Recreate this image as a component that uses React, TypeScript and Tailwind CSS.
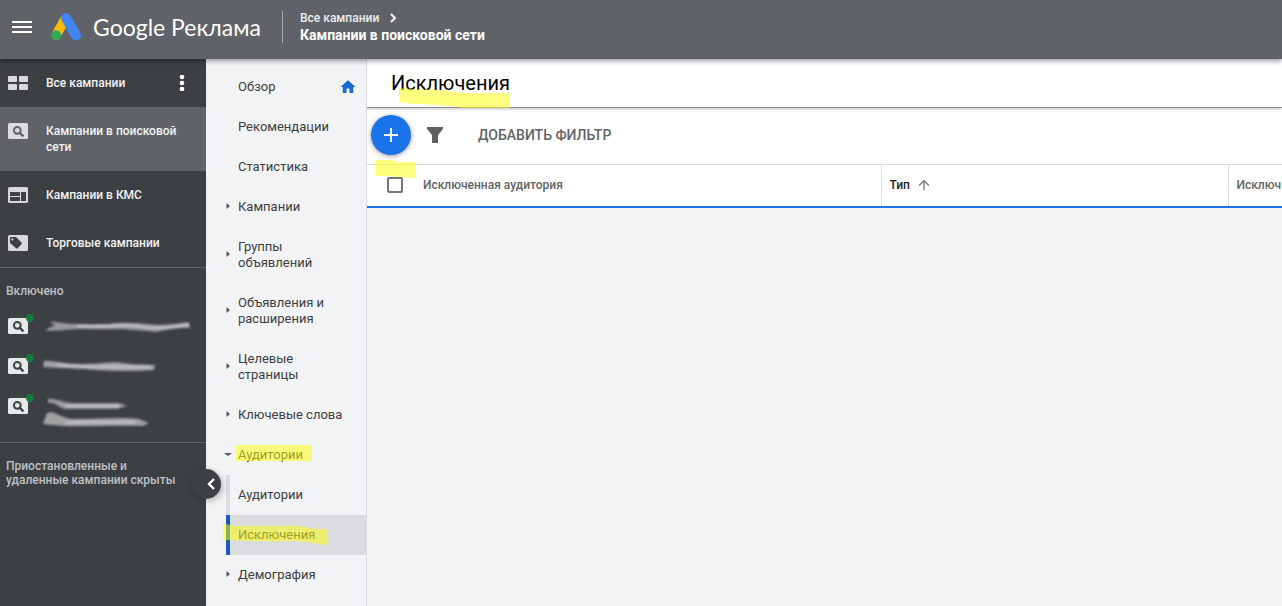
import { useState } from "react";
import { MdArrowUpward, MdHome } from "react-icons/md";

type Campaign = { id: string; label: string; icon: React.ReactNode };
type NavItem = { label: string; arrow?: boolean; open?: boolean; home?: boolean };

function GridIcon() {
  return (
    <svg width="20" height="14" viewBox="0 0 20 14" fill="#d6d8da">
      <rect width="9" height="6" rx="1" />
      <rect x="11" width="9" height="6" rx="1" />
      <rect y="8" width="9" height="6" rx="1" />
      <rect x="11" y="8" width="9" height="6" rx="1" />
    </svg>
  );
}

function SearchBoxIcon({ box, glass }: { box: string; glass: string }) {
  return (
    <svg width="20" height="16" viewBox="0 0 20 16">
      <rect width="20" height="16" rx="1.5" fill={box} />
      <circle cx="9.3" cy="7.3" r="3.4" fill="none" stroke={glass} strokeWidth="2" />
      <path d="M11.6 9.6 15.4 13.4" stroke={glass} strokeWidth="2.2" />
    </svg>
  );
}

function DisplayIcon() {
  return (
    <svg width="20" height="16" viewBox="0 0 20 16">
      <rect width="20" height="16" rx="1.5" fill="#d6d8da" />
      <path d="M2 5h10v4H2zM2 10h10v4H2zM13 5h5v9h-5z" fill="#3c4043" />
    </svg>
  );
}

function TagIcon() {
  return (
    <svg width="20" height="16" viewBox="0 0 20 16">
      <rect width="20" height="16" rx="1.5" fill="#d6d8da" />
      <path
        fillRule="evenodd"
        d="M2 3.2C2 2.4 2.5 2 3.2 2h4.3c.4 0 .7.1 1 .4l5 5.2c.5.5.5 1.1 0 1.6l-3.8 4c-.5.5-1.1.5-1.600 0L2.400 8.300c-.3-.3-.4-.6-.4-1zM4.300 3.300a1.100 1.100 0 1 0 0 2.200 1.100 1.100 0 0 0 0-2.200z"
        fill="#3c4043"
      />
    </svg>
  );
}

function AdsLogo() {
  return (
    <svg width="30" height="28" viewBox="0 0 30 28" className="shrink-0">
      <path d="M14.5 5.5 5.2 21.8" stroke="#fbbc04" strokeWidth="9.6" />
      <path d="M15 5 25 22.3" stroke="#4285f4" strokeWidth="10" strokeLinecap="round" />
      <circle cx="5.2" cy="22.3" r="5" fill="#34a853" />
    </svg>
  );
}

const campaigns: Campaign[] = [
  { id: "all", label: "Все кампании", icon: <GridIcon /> },
  {
    id: "search",
    label: "Кампании в поисковой сети",
    icon: <SearchBoxIcon box="#dadce0" glass="#5f6368" />,
  },
  { id: "display", label: "Кампании в КМС", icon: <DisplayIcon /> },
  { id: "shopping", label: "Торговые кампании", icon: <TagIcon /> },
];

const navItems: NavItem[] = [
  { label: "Обзор", home: true },
  { label: "Рекомендации" },
  { label: "Статистика" },
  { label: "Кампании", arrow: true },
  { label: "Группы объявлений", arrow: true },
  { label: "Объявления и расширения", arrow: true },
  { label: "Целевые страницы", arrow: true },
  { label: "Ключевые слова", arrow: true },
  { label: "Аудитории", arrow: true, open: true },
];

function Header() {
  return (
    <header className="relative z-20 flex h-[59px] shrink-0 items-center bg-[#5f6368] pb-1.5 pl-3 text-white shadow-[0_2px_5px_rgba(0,0,0,0.4)]">
      <button type="button" aria-label="Меню" className="flex h-6 w-5 items-center">
        <svg width="20" height="12" viewBox="0 0 20 12" fill="#fff">
          <path d="M0 0h20v2H0zM0 5h20v2H0zM0 10h20v2H0z" />
        </svg>
      </button>
      <a href="#" className="ml-[19px] flex items-center gap-3">
        <AdsLogo />
        <span className="w-[177px] whitespace-nowrap font-['Lato',sans-serif] text-[23px] leading-8">
          Google Реклама
        </span>
      </a>
      <nav className="ml-3 flex h-8 flex-col justify-center whitespace-nowrap border-l border-[#a3a6a9] pl-[17px]">
        <a href="#" className="flex items-center gap-2.5 text-xs leading-4 font-medium text-[#eceded]">
          Все кампании
          <svg width="8" height="10" viewBox="0 0 8 10" fill="none">
            <path d="M2 1 6 5 2 9" stroke="#fff" strokeWidth="2" />
          </svg>
        </a>
        <a href="#" className="text-sm leading-[18px] font-bold">
          Кампании в поисковой сети
        </a>
      </nav>
    </header>
  );
}

// Smudged campaign names
function Smudge({ index }: { index: number }) {
  const paths = [
    <>
      <path d="M7 4C12 3 20 6 30 6H66C75 4 90 5 105 6 125 8 135 5 146 4L147 10C132 10 125 12 112 14 80 10 60 12 40 11 25 11 10 14 2 12L12 7Z" fill="#97999a" />
      <path d="M34 8C60 10 80 5 100 9 115 12 130 8 146 7" stroke="#c6c8c8" strokeWidth="2" fill="none" />
    </>,
    <>
      <path d="M1 3C8 2 20 6 40 6S70 3 80 5 100 6 112 7L111 12C90 14 60 13 40 11 20 10 10 10 0 9Z" fill="#9fa1a2" />
      <path d="M14 7C40 10 70 8 108 9" stroke="#c4c6c6" strokeWidth="2" fill="none" />
    </>,
    <>
      <path d="M5 1C14 0 18 5 30 5H76L84 8 74 11H22C15 9 12 4 5 5Z" fill="#999b9c" />
      <path d="M22 8H76" stroke="#c6c8c8" strokeWidth="2" />
      <path d="M4 15C12 12 16 20 30 21 60 21 80 19 96 21L106 25 100 28C70 27 40 29 20 28L0 26Z" fill="#9fa1a2" />
      <path d="M22 25C50 23 70 25 92 24" stroke="#c6c8c8" strokeWidth="2" fill="none" />
    </>,
  ];
  return (
    <svg width="150" height="30" viewBox="0 0 150 30" className="overflow-visible blur-[1px]">
      {paths[index]}
    </svg>
  );
}

function CampaignSidebar() {
  const [active, setActive] = useState("search");

  return (
    <aside className="relative z-10 w-[206px] shrink-0 bg-[#3c4043] text-xs font-medium">
      <ul>
        {campaigns.map((item) => (
          <li
            key={item.id}
            className={item.id === active ? "flex items-start bg-[#5f6368]" : "flex items-start"}
          >
            <button
              type="button"
              onClick={() => setActive(item.id)}
              className="flex grow items-start gap-[18px] py-4 pl-2 text-left leading-4 text-[#f1f3f4]"
            >
              <span className="flex h-4 w-5 shrink-0 items-center">{item.icon}</span>
              <span className="max-w-[140px]">{item.label}</span>
            </button>
            {item.id === "all" && (
              <button type="button" aria-label="Ещё" className="mr-[21px] py-4">
                <svg width="6" height="16" viewBox="0 0 6 16" fill="#fff">
                  <circle cx="3" cy="2" r="2.3" />
                  <circle cx="3" cy="8" r="2.3" />
                  <circle cx="3" cy="14" r="2.3" />
                </svg>
              </button>
            )}
          </li>
        ))}
      </ul>
      <section className="border-y border-[#5f6368] pt-[15px]">
        <h2 className="pl-1.5 leading-4 text-[#bdc1c6]">Включено</h2>
        <ul className="mt-[19px] pb-1">
          {[0, 1, 2].map((i) => (
            <li key={i} className="flex h-10 items-start gap-[15px] pl-2">
              <span className="relative h-4 w-5 shrink-0">
                <SearchBoxIcon box="#e6e9e9" glass="#3c4043" />
                <span className="absolute -top-1 -right-1.5 size-2 rounded-full bg-[#137a42]" />
              </span>
              <Smudge index={i} />
            </li>
          ))}
        </ul>
      </section>
      <p className="pt-4 pr-7 pl-1.5 leading-[14px] text-[#bdc1c6]">
        Приостановленные и удаленные кампании скрыты
      </p>
      <button
        type="button"
        aria-label="Свернуть панель"
        className="absolute top-[410px] -right-[15px] flex size-[30px] items-center justify-end rounded-full bg-[#3c4043] pr-1.5 shadow-[2px_2px_6px_rgba(0,0,0,0.25)]"
      >
        <svg width="8" height="12" viewBox="0 0 8 12" fill="none">
          <path d="M7 1 2 6 7 11" stroke="#fff" strokeWidth="2.4" />
        </svg>
      </button>
    </aside>
  );
}

function PageNav() {
  return (
    <nav className="w-[161px] shrink-0 border-r border-[#dadce0] bg-[#f1f3f4] pt-2 text-[13px] leading-4 text-[#3c4043]">
      <ul>
        {navItems.map((item) => (
          <li key={item.label}>
            <a href="#" className="relative flex items-center py-3 pr-[9px] pl-[18px]">
              <span className="flex w-3.5 shrink-0">
                {item.arrow && (
                  <svg width="8" height="8" viewBox="0 0 8 8" fill="#55595d">
                    <path d={item.open ? "M0 2h8L4 5z" : "M2.500 0v6L6 3z"} />
                  </svg>
                )}
              </span>
              <span className="max-w-[106px] grow">{item.label}</span>
              {item.home && <MdHome size={18} className="-my-px ml-auto text-[#1967d2]" />}
              {item.open && (
                <span className="absolute top-2.5 left-[30px] h-4 w-[76px] bg-[#ffff00]/50" />
              )}
            </a>
          </li>
        ))}
      </ul>
      <ul className="ml-5">
        <li>
          <a href="#" className="block border-l-4 border-[#dadce0] py-3 pl-2">
            Аудитории
          </a>
        </li>
        <li>
          <a
            href="#"
            className="relative block border-l-4 border-[#185abc] bg-[#dadce0] py-3 pl-2"
          >
            Исключения
            <svg
              width="106"
              height="24"
              viewBox="0 0 106 24"
              className="absolute top-2 -left-2"
              fill="#ff0"
              fillOpacity=".5"
            >
              <path d="M1 0C10 4 20 3 40 3 60 3 78 2 84 4S98 6 105 6V22C92 21 85 18 70 18 50 19 30 18 1 17Z" />
            </svg>
          </a>
        </li>
      </ul>
      <a href="#" className="flex items-center py-3 pl-[18px]">
        <span className="flex w-3.5 shrink-0">
          <svg width="8" height="8" viewBox="0 0 8 8" fill="#55595d">
            <path d="M2.500 0v6L6 3z" />
          </svg>
        </span>
        Демография
      </a>
    </nav>
  );
}

function Toolbar() {
  return (
    <div className="flex h-14 items-center bg-white pb-0.5 pl-1 text-[#5f6368]">
      <button
        type="button"
        aria-label="Добавить"
        className="flex size-10 items-center justify-center rounded-full bg-[#1a73e8] shadow-[0_1px_5px_rgba(0,0,0,0.4)]"
      >
        <svg width="14" height="14" viewBox="0 0 14 14" fill="#fff">
          <path d="M6 0h2v6h6v2H8v6H6V8H0V6h6z" />
        </svg>
      </button>
      <button type="button" aria-label="Фильтр" className="ml-4">
        <svg width="16" height="16" viewBox="0 0 16 16" fill="#616161">
          <path d="M0 0h16v2l-5 6v8H5V8L0 2z" />
        </svg>
      </button>
      <button type="button" className="ml-[35px] text-sm font-medium">
        ДОБАВИТЬ ФИЛЬТР
      </button>
    </div>
  );
}

export default function App() {
  const [checked, setChecked] = useState(false);

  return (
    <div className="flex min-h-screen flex-col bg-[#f1f3f4] font-['Roboto',sans-serif]">
      <Header />
      <div className="flex grow">
        <CampaignSidebar />
        <PageNav />
        <main className="min-w-0 grow overflow-hidden">
          <div className="relative z-10 flex h-[49px] items-center border-b border-[#8c8c8c] bg-white pl-6 shadow-[0_1px_3px_rgba(0,0,0,0.25)]">
            <h1 className="text-xl text-black">Исключения</h1>
            <svg
              width="112"
              height="20"
              viewBox="0 0 112 20"
              className="absolute top-[29px] left-8"
              fill="#ff0"
              fillOpacity=".5"
            >
              <path d="M0 0C20 2 35 1 50 3 65 6 75 5 111 5V20H64C45 17 25 16 14 16L0 14Z" />
            </svg>
          </div>
          <Toolbar />
          <div className="relative">
            <table className="w-full table-fixed text-left text-xs text-[#5f6368]">
              <thead>
                <tr className="h-[42px] border-t border-b-2 border-t-[#dadce0] border-b-[#1a73e8] bg-white">
                  <th className="w-12 pl-5">
                    <input
                      type="checkbox"
                      aria-label="Выбрать все"
                      checked={checked}
                      onChange={(e) => setChecked(e.target.checked)}
                      className="block size-4 appearance-none rounded-xs border-2 border-[#757575] checked:bg-[#1a73e8]"
                    />
                  </th>
                  <th className="w-[466px] pl-2 font-medium">Исключенная аудитория</th>
                  <th className="w-[347px] border-l border-[#dadce0] pl-2 font-medium text-[#202124]">
                    <span className="flex items-center gap-1.5">
                      Тип
                      <MdArrowUpward size={16} className="text-[#757575]" />
                    </span>
                  </th>
                  <th className="border-l border-[#dadce0] pl-2 font-medium whitespace-nowrap">
                    Исключ
                  </th>
                </tr>
              </thead>
            </table>
            <svg
              width="40"
              height="18"
              viewBox="0 0 40 18"
              className="absolute -top-1 left-[9px]"
              fill="#ff0"
              fillOpacity=".5"
            >
              <path d="M0 0H16L20 2H40V18C25 17 15 16 0 16Z" />
            </svg>
          </div>
        </main>
      </div>
    </div>
  );
}
